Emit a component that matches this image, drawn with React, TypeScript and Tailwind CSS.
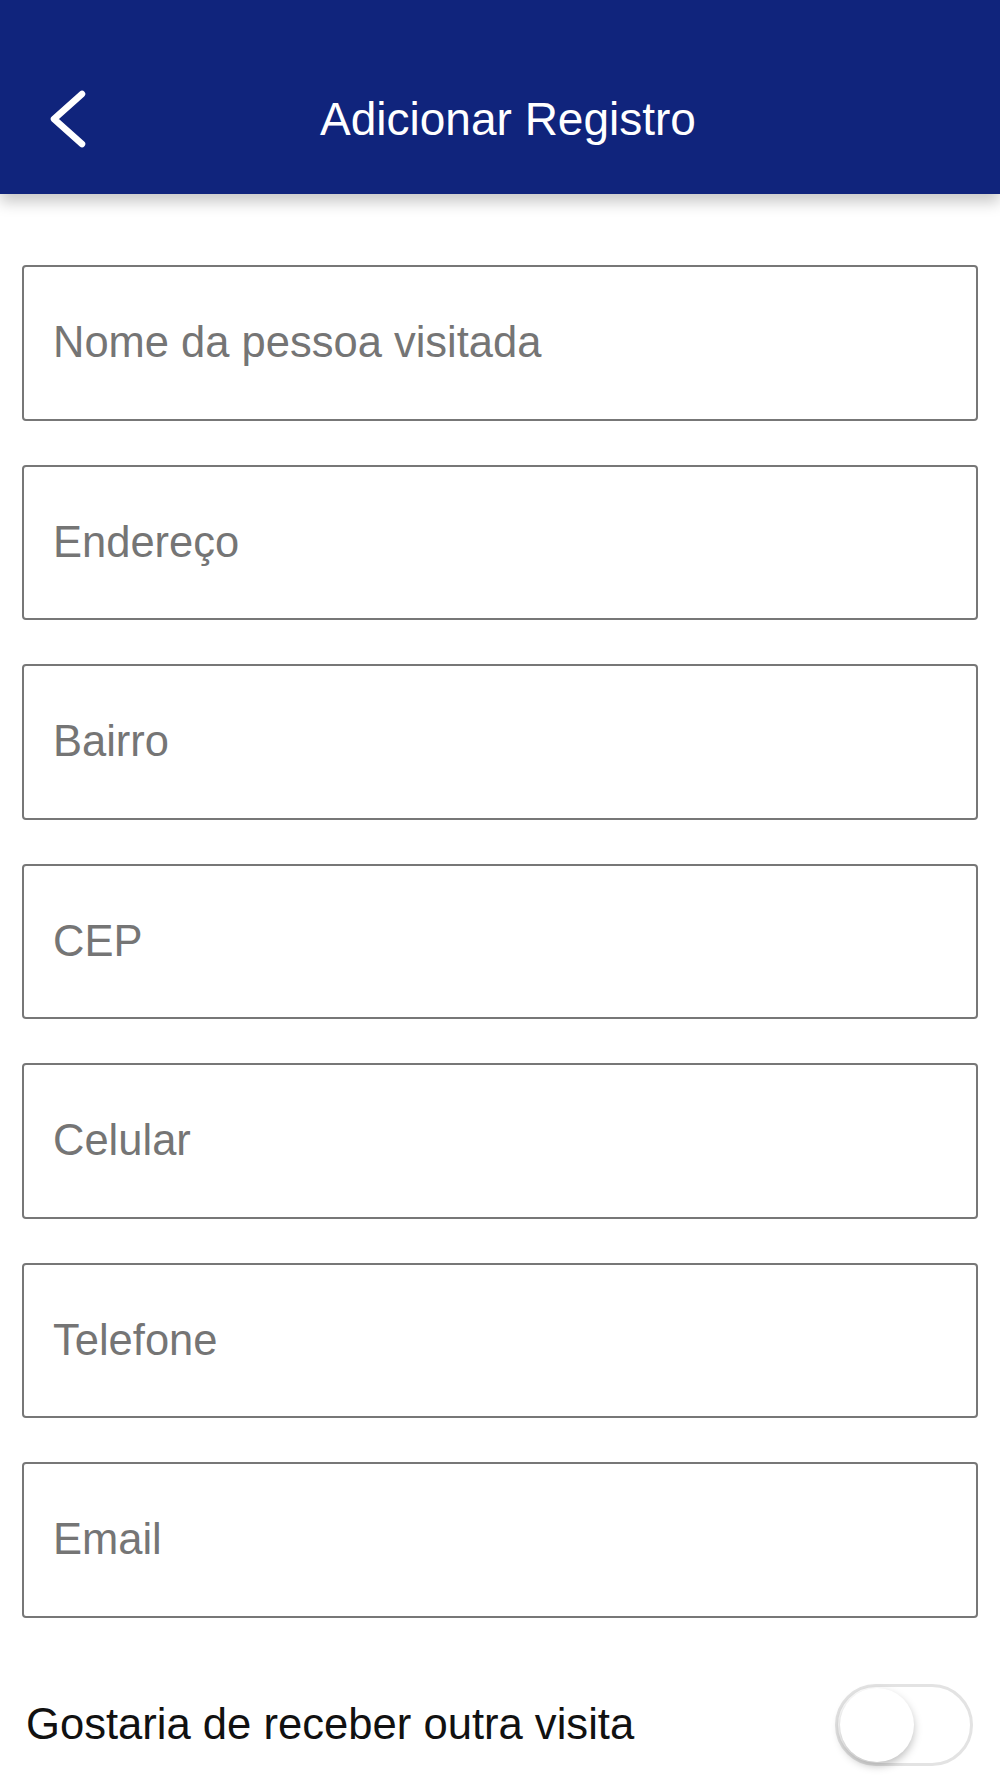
import { useState } from "react";

const fields = ["Nome da pessoa visitada", "Endereço", "Bairro", "CEP", "Celular", "Telefone", "Email"];

export default function App() {
  const [values, setValues] = useState<Record<string, string>>({});
  const [again, setAgain] = useState(false);

  return (
    <div className="min-h-[1778px] w-[1000px] bg-white font-['Liberation_Sans',Arial,sans-serif]">
      {/* header */}
      <div className="relative z-10 flex h-[194px] items-center justify-center bg-[#10247c] pt-[44px] shadow-[0_8px_14px_rgba(0,0,0,0.22)]">
        <button className="absolute left-[41px] top-[84px] flex h-[70px] w-[50px] items-center justify-center">
          <svg width="44" height="62" viewBox="0 0 44 62" fill="none">
            <polyline
              points="38,6 10,31 38,56"
              stroke="white"
              strokeWidth="6.5"
              strokeLinecap="round"
              strokeLinejoin="round"
            />
          </svg>
        </button>
        <h1 className="ml-[16px] text-[46px] leading-none text-white">Adicionar Registro</h1>
      </div>

      {/* form */}
      <div className="flex flex-col gap-[44px] px-[22px] pt-[71px]">
        {fields.map((f) => (
          <input
            key={f}
            value={values[f] || ""}
            onChange={(e) => setValues((prev) => ({ ...prev, [f]: e.target.value }))}
            placeholder={f}
            className="h-[155.5px] w-full rounded-[4px] border-2 border-[#777777] bg-white px-[29px] text-[43.5px] text-[#222] outline-none placeholder:text-[#757575]"
          />
        ))}
      </div>

      <div className="mt-[66px] flex items-center justify-between pl-[26px] pr-[27px]">
        <span className="text-[43.6px] text-[#111]">Gostaria de receber outra visita</span>
        <button
          onClick={() => setAgain(!again)}
          className={`relative h-[82px] w-[138px] rounded-full border-[3px] ${again ? "border-[#4cd964] bg-[#4cd964]" : "border-[#e3e3e3] bg-white"}`}
        >
          <span
            className={`absolute top-[1px] h-[74px] w-[74px] rounded-full bg-white shadow-[0_4px_8px_rgba(0,0,0,0.25)] ${again ? "left-[58px]" : "left-[2px]"}`}
          />
        </button>
      </div>
    </div>
  );
}
